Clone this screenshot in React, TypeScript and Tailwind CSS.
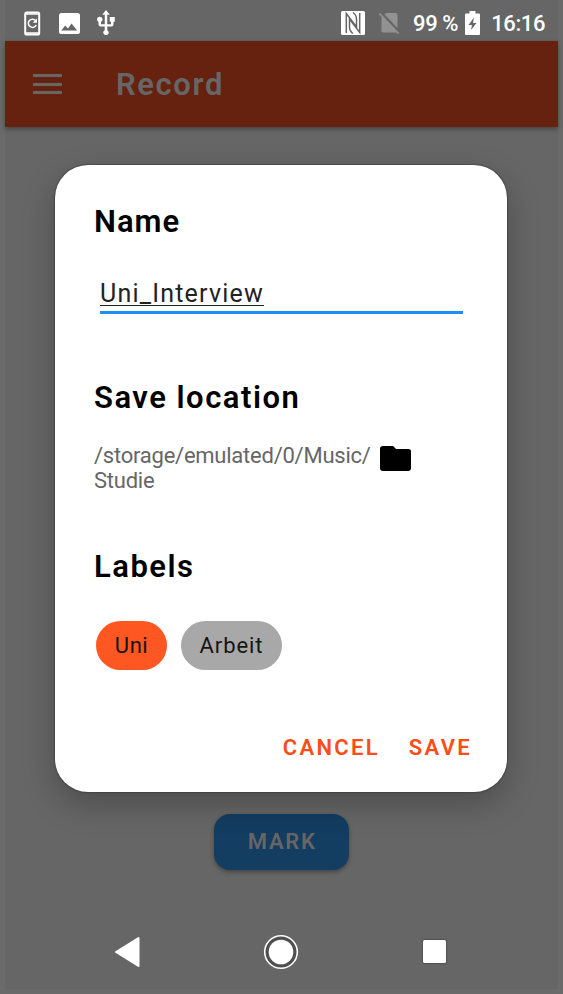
import type { ReactNode } from "react";

function StatusBar() {
  return (
    <div className="flex h-[41px] shrink-0 items-center pt-[5px] text-[22px] font-medium leading-none text-white">
      <svg className="ml-[19px] shrink-0" width="17" height="25" viewBox="0 0 17 25" fill="none" stroke="#fff">
        <rect x="1.2" y="1.500" width="14" height="22" rx="1.600" strokeWidth="2" />
        <path d="M1.500 3h13.600M1.500 22h13.600" strokeWidth="1.600" />
        <path d="M11.600 9.600A4.100 4.100 0 1 0 12.200 14" strokeWidth="1.500" />
        <path d="M13 7.500v4.300H8.700z" fill="#fff" stroke="none" />
      </svg>
      <svg className="ml-[18px] shrink-0" width="21" height="21" viewBox="3 3 18 18" fill="#fff">
        <path d="M21 19V5c0-1.1-.9-2-2-2H5c-1.1 0-2 .9-2 2v14c0 1.100.9 2 2 2h14c1.100 0 2-.9 2-2z" />
        <path d="M5 18l3.300-4.300 2.400 2.500L13.800 12l4.700 6z" fill="#666" />
      </svg>
      <svg className="ml-[16px] shrink-0" width="20" height="26" viewBox="4 1 16 22" fill="#fff" preserveAspectRatio="none">
        <path d="M15 7v4h1v2h-3V5h2l-3-4-3 4h2v8H8v-2.070c.7-.37 1.200-1.080 1.200-1.930 0-1.210-.99-2.200-2.200-2.200-1.210 0-2.200.99-2.200 2.200 0 .85.5 1.560 1.200 1.930V13c0 1.110.89 2 2 2h3v3.050c-.71.37-1.200 1.100-1.200 1.950 0 1.220.99 2.200 2.200 2.200 1.210 0 2.200-.98 2.200-2.200 0-.85-.49-1.580-1.200-1.950V15h3c1.110 0 2-.89 2-2v-2h1V7h-4z" />
      </svg>
      <svg className="ml-auto shrink-0" width="24" height="24" viewBox="0 0 24 24">
        <rect width="24" height="24" rx="1.500" fill="#fff" />
        <path d="M5.300 22V2.500L15.500 16V8Q15.500 4 12 1.500M18.700 2v19.500L8.500 8v8Q8.500 20 12 22.500" fill="none" stroke="#666" strokeWidth="1.500" />
      </svg>
      <svg className="ml-[14px] shrink-0" width="21" height="22" viewBox="0 0 21 22">
        <path d="M7 1h9.500q2 0 2 2v17.500H4q-1.500 0-1.500-2V5.500z" fill="#929292" />
        <path d="M1.500.3l19 20" stroke="#666" strokeWidth="3" />
        <path d="M.5 1.500l19 20" stroke="#929292" strokeWidth="1.700" />
      </svg>
      <span className="ml-[13px] mt-[2px] whitespace-nowrap tracking-[-0.4px]">99 %</span>
      <svg className="ml-[7px] shrink-0" width="15" height="24" viewBox="0 0 15 24">
        <path d="M4.500 0h6v2.500H14q1 0 1 1V23q0 1-1 1H1q-1 0-1-1V3.500q0-1 1-1h3.500z" fill="#fff" />
        <path d="M9 6.500L3.500 14H7l-1 5 5.500-7H8z" fill="#666" />
      </svg>
      <span className="ml-[11px] mr-[13px] mt-[2px] whitespace-nowrap tracking-[-0.4px]">16:16</span>
    </div>
  );
}

function AppBar() {
  return (
    <header className="flex h-[86px] shrink-0 items-center bg-[#66220f] shadow-[0_2px_5px_rgba(0,0,0,0.35)]">
      <div className="ml-[28px] flex w-[29px] flex-col gap-[5.500px]">
        <span className="h-[3px] bg-[#666]" />
        <span className="h-[3px] bg-[#666]" />
        <span className="h-[3px] bg-[#666]" />
      </div>
      <h1 className="ml-[54px] text-[31px] font-semibold leading-none tracking-[1.6px] text-[#666]">Record</h1>
    </header>
  );
}

function Heading({ children }: { children: ReactNode }) {
  return <h2 className="text-[31px] font-semibold leading-[36px] text-black">{children}</h2>;
}

function SaveDialog() {
  return (
    <div className="absolute left-[55px] top-[164.500px] flex h-[627px] w-[452px] flex-col rounded-[33px] bg-white px-[39px] shadow-[0_12px_32px_rgba(0,0,0,0.25),0_0_2px_rgba(0,0,0,0.7)]">
      <div className="mt-[39.500px] tracking-[1px]">
        <Heading>Name</Heading>
      </div>
      <div className="ml-[6px] mt-[35px] h-[39px] w-[363px] border-b-[3px] border-[#1c8ef3] text-[25px] leading-[38px] text-[#222]">
        <span className="inline-block h-[31px] whitespace-nowrap border-b border-[#222] tracking-[1.2px]">Uni_Interview</span>
      </div>
      <div className="mt-[66px] tracking-[1.500px]">
        <Heading>Save location</Heading>
      </div>
      <div className="mt-[27px] flex">
        <p className="w-[286px] text-[22px] leading-[25px] tracking-[-0.24px] text-[#666]">
          /storage/emulated/0/Music/
          <br />
          Studie
        </p>
        <svg className="mt-[3px]" width="31" height="25" viewBox="0 0 31 25">
          <path d="M3 0h9.500q1 0 1.600.9L16 3h12.500Q31 3 31 5.500v16.500q0 3-3 3H3q-3 0-3-3V3q0-3 3-3z" fill="#000" />
        </svg>
      </div>
      <div className="mt-[56px] tracking-[1.500px]">
        <Heading>Labels</Heading>
      </div>
      <div className="ml-[2px] mt-[36px] flex gap-[14px] text-[22px] text-[#151515]">
        <span className="flex h-[49px] w-[71px] items-center justify-center rounded-full bg-[#ff5722] tracking-[0.5px]">Uni</span>
        <span className="flex h-[49px] w-[101px] items-center justify-center rounded-full bg-[#a8a8a8] tracking-[0.9px]">Arbeit</span>
      </div>
      <div className="-mr-[4px] mt-[65px] flex justify-end gap-[29px] text-[22px] font-semibold leading-[26px] tracking-[2.300px] text-[#fc4c17]">
        <button>CANCEL</button>
        <button>SAVE</button>
      </div>
    </div>
  );
}

function NavBar() {
  return (
    <nav className="mt-auto flex h-[75px] shrink-0 items-center pl-[109px]">
      <svg width="26" height="32" viewBox="0 0 26 32">
        <path d="M24.500 2v28L2 16z" fill="#fff" stroke="#fff" strokeWidth="2" strokeLinejoin="round" />
      </svg>
      <svg className="ml-[123px]" width="36" height="36" viewBox="0 0 36 36">
        <circle cx="18" cy="18" r="17" fill="#505050" />
        <circle cx="18" cy="18" r="16.300" fill="none" stroke="#fff" strokeWidth="1.600" />
        <circle cx="18" cy="18" r="12.300" fill="#fff" />
      </svg>
      <span className="ml-[124px] h-[23px] w-[23px] rounded-[1.500px] bg-white shadow-[0_0_2px_rgba(0,0,0,0.7)]" />
    </nav>
  );
}

export default function App() {
  return (
    <div className="relative h-[994px] w-[563px] overflow-hidden bg-[#6a6a6a] px-[5px] pb-[5px] font-[Roboto,sans-serif]">
      <div className="flex h-full flex-col bg-[#666]">
        <StatusBar />
        <AppBar />
        <button className="ml-[208.500px] mt-[687px] flex h-[55.500px] w-[135.500px] shrink-0 items-center justify-center rounded-[16px] bg-[#133d61] pl-[2px] text-[22px] font-semibold leading-[26px] tracking-[1.700px] text-[#666] shadow-[0_2px_4px_rgba(0,0,0,0.35)]">
          MARK
        </button>
        <NavBar />
      </div>
      <SaveDialog />
    </div>
  );
}
